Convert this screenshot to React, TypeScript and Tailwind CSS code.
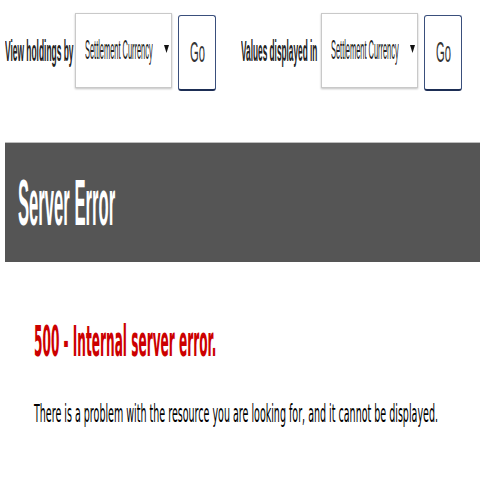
import React from 'react'

function Squeeze({ className, children }: { className: string; children: React.ReactNode }) {
  return <span className={`inline-block whitespace-nowrap origin-left ${className}`}>{children}</span>
}

function CurrencySelect() {
  return (
    <div className="w-[97px] h-[75px] shrink-0 border border-[#c9c9c9] shadow-[0_1px_2px_rgba(0,0,0,0.25)] bg-white flex items-center pl-[9px]">
      <div className="w-[70px] shrink-0">
        <Squeeze className="scale-x-[0.275] text-[27px] leading-none text-[#222] font-['Liberation_Sans',sans-serif]">
          Settlement Currency
        </Squeeze>
      </div>
      <svg width="5" height="8" viewBox="0 0 5 8" className="shrink-0 ml-[9px] mt-[-3px]">
        <path d="M0 0 L5 0 L2.5 8 Z" fill="#111" />
      </svg>
    </div>
  )
}

function GoButton() {
  return (
    <div className="w-[38px] h-[76px] shrink-0 mt-[2px] ml-[6px] rounded-[3px] border border-[#3a4f7c] border-b-[2px] border-b-[#1d2e55] bg-white flex items-center justify-center">
      <div className="w-[15px]">
        <Squeeze className="scale-x-[0.373] text-[30px] leading-none text-[#333] font-['Liberation_Sans',sans-serif]">
          Go
        </Squeeze>
      </div>
    </div>
  )
}

export default function App() {
  return (
    <div className="w-[480px] h-[480px] bg-white overflow-hidden">
      <div className="flex items-start pt-[13px] pl-[5px]">
        <div className="h-[75px] flex items-center w-[70px] shrink-0">
          <Squeeze className="scale-x-[0.28] text-[30px] leading-none font-bold text-[#222] font-['Liberation_Sans',sans-serif]">
            View holdings by
          </Squeeze>
        </div>
        <CurrencySelect />
        <GoButton />
        <div className="h-[75px] flex items-center w-[80px] ml-[25px] shrink-0">
          <Squeeze className="scale-x-[0.276] text-[30px] leading-none font-bold text-[#222] font-['Liberation_Sans',sans-serif]">
            Values displayed in
          </Squeeze>
        </div>
        <CurrencySelect />
        <GoButton />
      </div>

      <div className="ml-[5px] mt-[51px] h-[120px] bg-[#555555] border-t border-[#bdbdbd] flex items-center pl-[13px]">
        <Squeeze className="scale-x-[0.26] text-[64px] leading-none font-bold text-white font-['Liberation_Sans',sans-serif]">
          Server Error
        </Squeeze>
      </div>

      <div className="pl-[34px] pt-[59px]">
        <Squeeze className="scale-x-[0.289] text-[42px] leading-none font-bold text-[#cc0000] font-['DejaVu_Sans',sans-serif]">
          500 - Internal server error.
        </Squeeze>
      </div>

      <div className="pl-[34px] pt-[39px]">
        <Squeeze className="scale-x-[0.397] text-[24px] leading-none text-black font-['DejaVu_Sans',sans-serif]">
          There is a problem with the resource you are looking for, and it cannot be displayed.
        </Squeeze>
      </div>
    </div>
  )
}
